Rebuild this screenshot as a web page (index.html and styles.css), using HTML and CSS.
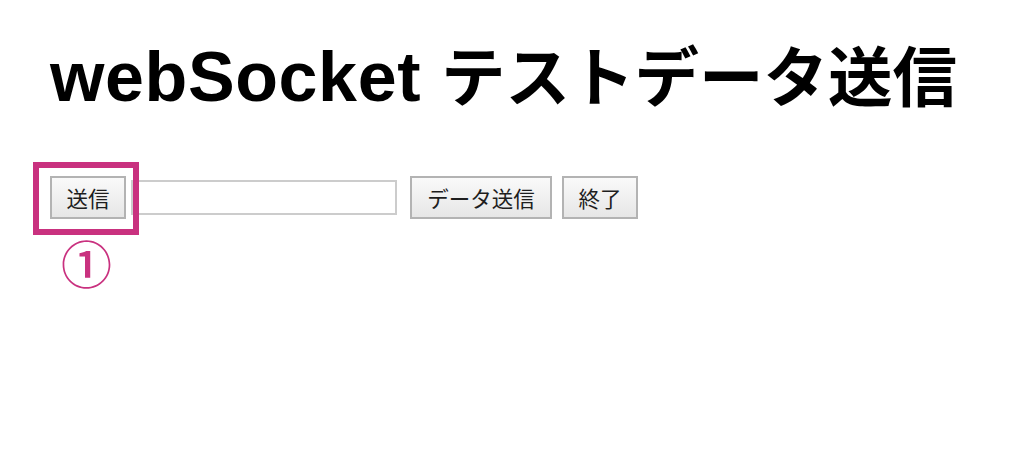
FILE: index.html
```html
<!DOCTYPE html>
<html lang="ja">
<head>
<meta charset="utf-8">
<title>webSocket テストデータ送信</title>
<link rel="stylesheet" href="styles.css">
</head>
<body>
<div class="page">
  <h1 class="title"><span class="title-latin">webSocket</span> <span class="title-ja">テストデータ送信</span></h1>
  <div class="controls">
    <span class="marked"><button class="btn btn-send">送信</button></span>
    <input class="text-input" type="text">
    <button class="btn btn-data">データ送信</button>
    <button class="btn btn-end">終了</button>
  </div>
  <div class="step">①</div>
</div>
</body>
</html>
```
FILE: styles.css
```css
html, body {
  margin: 0;
  padding: 0;
  background: #ffffff;
}

.page {
  padding: 28px 50px 0 50px;
  display: flex;
  flex-direction: column;
  align-items: flex-start;
}

.title {
  margin: 0;
  font-weight: bold;
  color: #000;
  line-height: 90px;
  height: 90px;
  white-space: nowrap;
}

.title-latin {
  font-family: "Liberation Sans", Arial, sans-serif;
  font-size: 70px;
  letter-spacing: 0.6px;
}

.title-ja {
  font-family: "Noto Sans CJK JP", sans-serif;
  font-size: 64.5px;
  margin-left: 12px;
}

.controls {
  margin-top: 58px;
  display: flex;
  align-items: center;
}

.marked {
  position: relative;
  display: inline-flex;
}

.marked::after {
  content: "";
  position: absolute;
  left: -17px;
  top: -14px;
  right: -13px;
  bottom: -16px;
  border: 6px solid #c9317f;
  pointer-events: none;
}

.btn {
  font-family: "Noto Sans CJK JP", sans-serif;
  font-size: 21.5px;
  color: #1e1e1e;
  height: 43px;
  padding: 0;
  border: 2px solid #b3b3b3;
  border-radius: 0;
  background: linear-gradient(#fafafa, #e6e6e6);
  line-height: 1;
  display: inline-flex;
  align-items: center;
  justify-content: center;
}

.btn-send { width: 76px; }
.btn-data { width: 142px; margin-left: 13px; }
.btn-end { width: 76px; margin-left: 10px; }

.text-input {
  margin-left: 5px;
  width: 266px;
  height: 35px;
  box-sizing: border-box;
  border: 2px solid #cccccc;
  background: #fff;
  padding: 0 4px;
  font-size: 18px;
}

.step {
  margin-top: 15px;
  margin-left: 11px;
  font-family: "Noto Sans CJK JP", sans-serif;
  font-size: 51px;
  line-height: 56px;
  color: #c9317f;
  font-weight: 500;
}
```
